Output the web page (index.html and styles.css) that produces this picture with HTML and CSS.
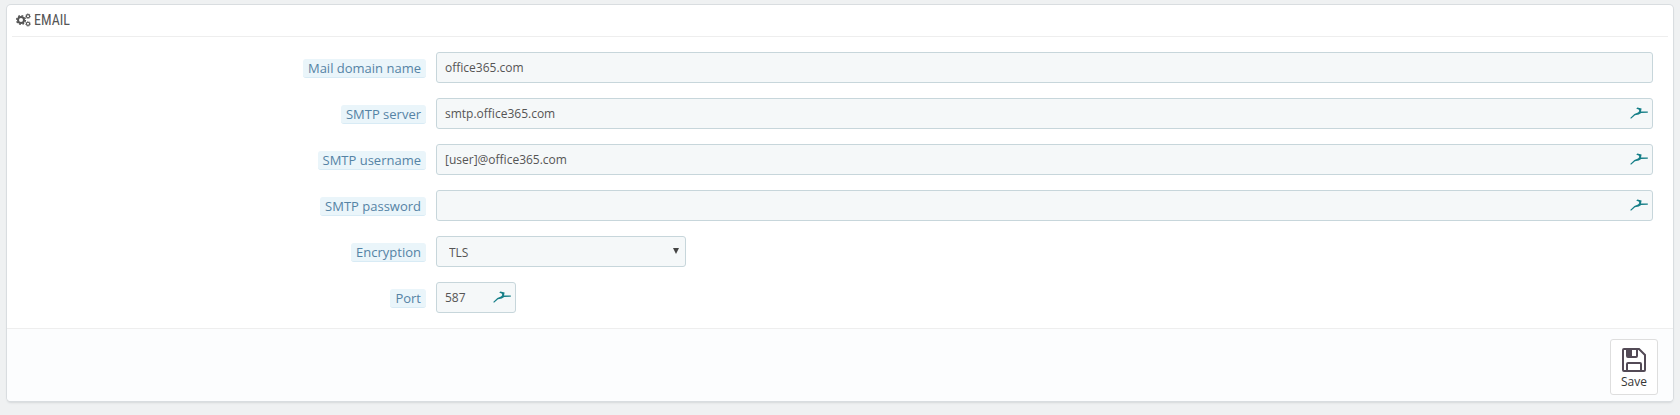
FILE: index.html
```html
<!DOCTYPE html>
<html lang="en">
<head>
    <meta charset="UTF-8">
    <meta name="viewport" content="width=device-width, initial-scale=1.0">
    <title>Email</title>
    <link rel="stylesheet" href="styles.css">
</head>
<body>
    <!-- Shared icon for the autofill fields -->
    <svg class="sprite" aria-hidden="true">
        <symbol id="bird" viewBox="0 0 18 12">
            <path d="M0.2 11 L4.4 7 L8 5.4 L9.2 4.2 L9 2.8 L6.2 1.6 L7.4 0.4 L11.6 1.6 L11 4.4 L17.8 4.4 L17.8 5.7 L11.2 6 L8.8 7.6 L5 8.2 L1 11.8 Z"/>
        </symbol>
    </svg>

    <form class="panel" action="#" method="post">
        <h3 class="panel-heading">
            <svg class="icon-cogs" viewBox="0 0 15 14" aria-hidden="true">
                <circle cx="5" cy="7" r="3" stroke-width="2"/>
                <circle cx="5" cy="7" r="4.4" stroke-width="1.4" stroke-dasharray="1.8 1.65"/>
                <circle cx="12" cy="3.2" r="1.6" stroke-width="1.1"/>
                <circle cx="12" cy="3.2" r="2.4" stroke-width="0.8" stroke-dasharray="1 0.9"/>
                <circle cx="12" cy="10.8" r="1.6" stroke-width="1.1"/>
                <circle cx="12" cy="10.8" r="2.4" stroke-width="0.8" stroke-dasharray="1 0.9"/>
            </svg>
            EMAIL
        </h3>

        <div class="form-wrapper">
            <div class="form-group">
                <div class="label-col"><label for="mail_domain">Mail domain name</label></div>
                <div class="field"><input type="text" id="mail_domain" name="mail_domain" value="office365.com"></div>
            </div>
            <div class="form-group">
                <div class="label-col"><label for="smtp_server">SMTP server</label></div>
                <div class="field">
                    <input type="text" id="smtp_server" name="smtp_server" value="smtp.office365.com">
                    <svg class="bird"><use href="#bird"/></svg>
                </div>
            </div>
            <div class="form-group">
                <div class="label-col"><label for="smtp_user">SMTP username</label></div>
                <div class="field">
                    <input type="text" id="smtp_user" name="smtp_user" value="[user]@office365.com">
                    <svg class="bird"><use href="#bird"/></svg>
                </div>
            </div>
            <div class="form-group">
                <div class="label-col"><label for="smtp_password">SMTP password</label></div>
                <div class="field">
                    <input type="password" id="smtp_password" name="smtp_password">
                    <svg class="bird"><use href="#bird"/></svg>
                </div>
            </div>
            <div class="form-group">
                <div class="label-col"><label for="encryption">Encryption</label></div>
                <div class="field field-select">
                    <select id="encryption" name="encryption">
                        <option>None</option>
                        <option selected>TLS</option>
                        <option>SSL</option>
                    </select>
                    <svg class="arrow" viewBox="0 0 6 6"><path d="M0 0H6L3 6Z"/></svg>
                </div>
            </div>
            <div class="form-group">
                <div class="label-col"><label for="port">Port</label></div>
                <div class="field field-port">
                    <input type="text" id="port" name="port" value="587">
                    <svg class="bird"><use href="#bird"/></svg>
                </div>
            </div>
        </div>

        <div class="panel-footer">
            <button type="submit" class="save-button">
                <svg viewBox="0 0 24 24" aria-hidden="true">
                    <path class="outline" d="M2 1H17L23 7V22Q23 23 22 23H2Q1 23 1 22V2Q1 1 2 1Z"/>
                    <path class="outline" d="M5 23V16Q5 15 6 15H18Q19 15 19 16V23"/>
                    <path class="outline" d="M5 1V8Q5 9 6 9H14Q15 9 15 8V1"/>
                    <path d="M5 1H10V9H5Z"/>
                </svg>
                Save
            </button>
        </div>
    </form>
</body>
</html>
```

FILE: styles.css
```css
* {
    box-sizing: border-box;
}

body {
    margin: 0;
    padding: 5px 7px;
    background-color: #eff1f2;
    color: #555;
    font-family: "Open Sans", sans-serif;
    font-size: 12px;
}

.sprite {
    display: none;
}

.panel {
    background-color: #fff;
    border-radius: 4px;
    box-shadow: 0 0 0 1px #d9dde0, 0 2px 2px #d5d8da;
    overflow: hidden;
}

.panel-heading {
    display: flex;
    align-items: center;
    gap: 3px;
    height: 32px;
    margin: 0 5px;
    padding: 0 4px 2px;
    border-bottom: 1px solid #eee;
    font-family: "Roboto Condensed", "Liberation Sans Narrow", sans-serif;
    font-size: 14px;
    font-weight: 400;
    color: #555;
}

.icon-cogs {
    width: 15px;
    height: 14px;
    fill: none;
    stroke: #555;
}

.form-wrapper {
    display: flex;
    flex-direction: column;
    gap: 15px;
    padding: 15px 15px;
}

.form-group {
    display: grid;
    grid-template-columns: 1fr 3fr;
}

.label-col {
    padding: 7px 5px 0;
    text-align: right;
}

.label-col label {
    display: inline-block;
    padding: 0 5px;
    background-color: #eaf5fa;
    border-bottom: 1px solid #d8ebf5;
    border-radius: 3px;
    color: #5583a5;
    font-size: 13px;
    line-height: 18px;
}

.field {
    position: relative;
    margin: 0 5px;
}

.field-select {
    width: 250px;
}

.field-port {
    width: 80px;
}

.field input,
.field select {
    display: block;
    width: 100%;
    height: 31px;
    padding: 0 8px;
    background-color: #f5f8f9;
    border: 1px solid #c7d6db;
    border-radius: 3px;
    color: #555;
    font-family: inherit;
    font-size: 12px;
}

.field select {
    padding: 1px 12px 0;
    appearance: none;
}

.bird {
    position: absolute;
    top: 9px;
    right: 5px;
    width: 18px;
    height: 12px;
    fill: #167f88;
}

.arrow {
    position: absolute;
    top: 12px;
    right: 7px;
    width: 6px;
    height: 6px;
    fill: #444;
}

.panel-footer {
    display: flex;
    justify-content: flex-end;
    padding: 10px 15px 6px;
    background-color: #fcfdfe;
    border-top: 1px solid #eee;
}

.save-button {
    display: flex;
    flex-direction: column;
    align-items: center;
    width: 48px;
    height: 56px;
    padding: 8px 0 0;
    background-color: #fff;
    border: 1px solid #dedede;
    border-radius: 3px;
    color: #363636;
    font-family: inherit;
    font-size: 12px;
    line-height: 20px;
}

.save-button svg {
    width: 24px;
    height: 24px;
    fill: #534a56;
}

.save-button .outline {
    fill: none;
    stroke: #534a56;
    stroke-width: 2;
}
```
